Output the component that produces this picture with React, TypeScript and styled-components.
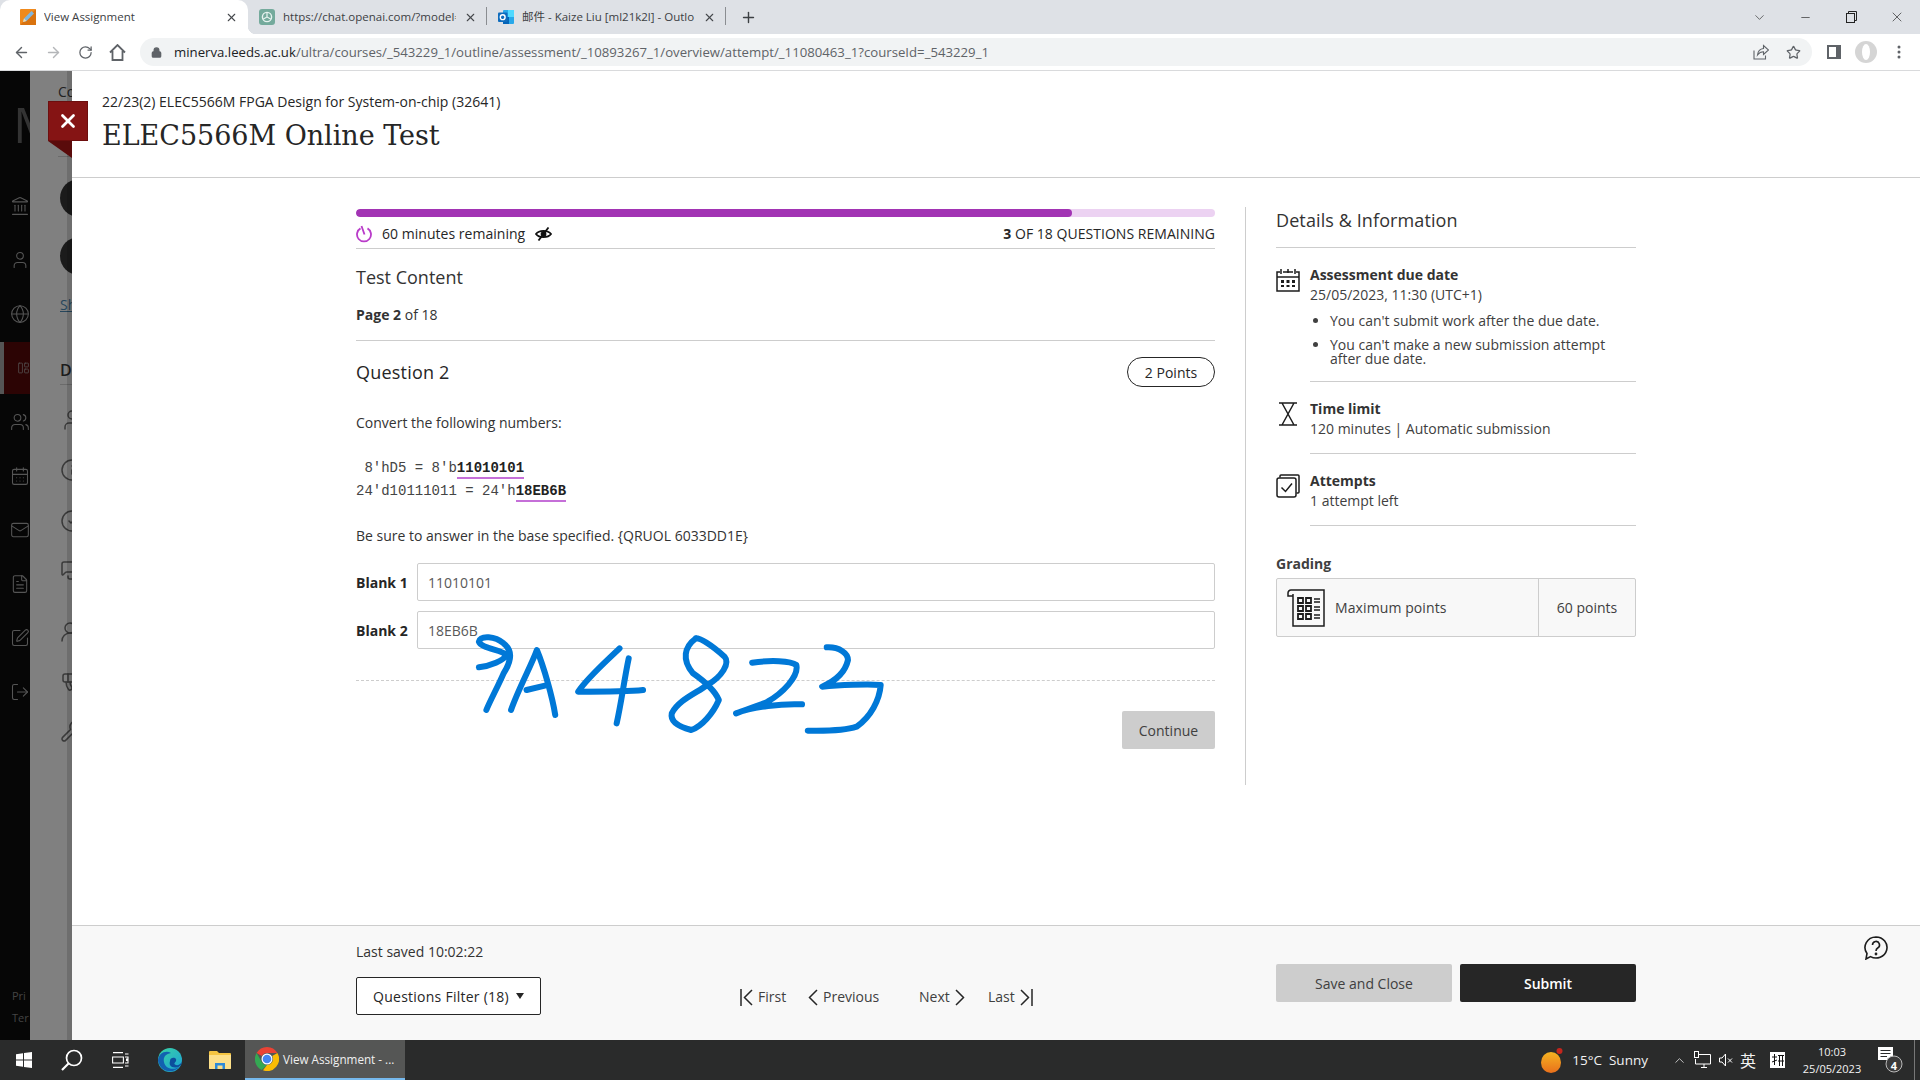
import React from 'react';
import styled, { createGlobalStyle } from 'styled-components';
import { Landmark, User, Globe, LayoutPanelLeft, Users, CalendarDays, Mail, FileText, SquarePen, LogOut, Info, CircleCheck, MessagesSquare, UsersRound, Megaphone, Wrench, Minus, Plus, ArrowLeft, ArrowRight, RotateCw, Lock, X, Star, ChevronUp, ChevronDown } from 'lucide-react';

const Global = createGlobalStyle`
  html, body { margin: 0; padding: 0; background: #fff; }
  #root { width: 1920px; height: 1080px; overflow: hidden; }
  * { box-sizing: border-box; }
  body { font-family: "Open Sans", "Noto Sans CJK SC", sans-serif; color: #262626; }
`;

const Page = styled.div`
  width: 1920px; height: 1080px; display: flex; flex-direction: column; position: relative; overflow: hidden;
`;

/* ---------- browser chrome ---------- */
const TabStrip = styled.div`
  height: 34px; background: #dee1e6; display: flex; align-items: stretch; flex: none; font-size: 12px; color: #3c4043;
`;
const Tab = styled.div<{ $w: number; $active?: boolean; $sep?: boolean }>`
  width: ${p => p.$w}px; display: flex; align-items: center; position: relative;
  padding: 0 10px 0 ${p => (p.$active ? 20 : 11)}px; gap: 8px;
  background: ${p => (p.$active ? '#fff' : 'transparent')};
  border-radius: ${p => (p.$active ? '10px 10px 0 0' : '0')};
  ${p => p.$sep && `&::after { content: ''; position: absolute; right: 0; top: 7px; bottom: 9px; width: 1px; background: #8a8d91; }`}
  ${p => p.$active && `&::after { content: ''; position: absolute; right: -8px; bottom: 0; width: 8px; height: 8px; background: radial-gradient(circle at 100% 0, transparent 8px, #fff 8.5px); }`}
`;
const TabTitle = styled.span`
  flex: 1; white-space: nowrap; overflow: hidden; font-size: 11.5px; line-height: 16px;
`;
const TabClose = styled.span`
  display: flex; flex: none; color: #45484c;
`;
const NewTab = styled.div`
  width: 44px; display: flex; align-items: center; justify-content: center; color: #3c4043;
`;
const WindowControls = styled.div`
  margin-left: auto; display: flex; align-items: center; color: #222; padding-right: 0;
`;
const WinBtn = styled.div<{ $w: number }>`
  width: ${p => p.$w}px; display: flex; justify-content: center; align-items: center; height: 28px;
`;
const Toolbar = styled.div`
  height: 37px; background: #fff; border-bottom: 1px solid #d9dadc; display: flex; align-items: flex-start; flex: none; padding-top: 4px;
`;
const NavBtn = styled.div<{ $muted?: boolean }>`
  width: 32px; height: 28px; display: flex; align-items: center; justify-content: center;
  color: ${p => (p.$muted ? '#b4b6b9' : '#5f6368')};
`;
const NavGroup = styled.div`
  display: flex; padding-left: 5px; width: 140px;
`;
const Omnibox = styled.div`
  width: 1672px; height: 28px; background: #f1f3f4; border-radius: 14px; display: flex; align-items: center; padding: 0 0 0 11px;
`;
const Url = styled.span`
  font-family: "Open Sans", sans-serif; font-size: 13.2px; color: #5f6368; margin-left: 12px; white-space: nowrap;
  b { font-weight: 400; color: #202124; }
`;
const OmniEnd = styled.div`
  margin-left: auto; display: flex; align-items: center; gap: 17px; padding-right: 11px; color: #5f6368;
`;
const ToolEnd = styled.div`
  display: flex; align-items: center; height: 28px; color: #5f6368; margin-left: 15px; gap: 14px;
`;
const Avatar = styled.div`
  width: 22px; height: 22px; border-radius: 50%; background: #d5d5d5; display: flex; align-items: center; justify-content: center;
  &::after { content: ''; width: 8px; height: 16px; border-radius: 50%; background: #fff; }
`;
const MenuDots = styled.div`
  margin-left: 6px; display: flex;
`;

/* ---------- underlying (dimmed) course page ---------- */
const Body = styled.div`
  flex: 1; display: flex; min-height: 0; position: relative;
`;
const Rail = styled.nav`
  width: 30px; flex: none; background: #060606; display: flex; flex-direction: column; overflow: hidden; color: #555;
`;
const RailLogo = styled.div`
  height: 108px; padding: 22px 0 0 13px; font-family: "Open Sans", sans-serif; font-size: 50px; line-height: 62px; color: #333; white-space: nowrap;
`;
const RailItem = styled.div<{ $active?: boolean }>`
  height: 54px; flex: none; display: flex; align-items: center; padding-left: 10px;
  ${p => p.$active && `background: #2c0404; border-left: 4px solid #555; padding-left: 13px; color: #5a5a5a; margin: 1px 0;height: 52px;`}
`;
const RailFoot = styled.div`
  margin-top: auto; padding: 0 0 11px 12px; font-size: 11px; line-height: 22px; color: #444;
`;
const Under = styled.div`
  width: 42px; flex: none; background: #808080; overflow: hidden; position: relative; color: #3a3a3a; padding-left: 30px;
  &::after { content: ''; position: absolute; top: 0; bottom: 0; right: 0; width: 5px; background: rgba(0,0,0,.14); }
`;
const UnderInner = styled.div`
  width: 120px; display: flex; flex-direction: column; align-items: flex-start;
`;
const UnderCourse = styled.div`
  height: 86px; padding-top: 12px; margin-left: -2px; font-size: 14px; line-height: 18px; color: #222; border-bottom: 1px solid #6b6b6b; width: 100%;
`;
const UnderCircle = styled.div<{ $top: number }>`
  width: 38px; height: 38px; border-radius: 50%; background: #1b1b1b; margin-top: ${p => p.$top}px; flex: none;
`;
const UnderLink = styled.div`
  margin-top: 20px; font-size: 14px; line-height: 20px; color: #26465c; text-decoration: underline;
`;
const UnderHead = styled.div`
  margin-top: 45px; width: 100%; height: 25px; font-size: 16px; font-weight: 600; line-height: 20px; color: #1d1d1d; border-bottom: 1px solid #6b6b6b;
`;
const UnderIcon = styled.div<{ $top: number }>`
  margin-top: ${p => p.$top}px; display: flex; height: 24px; align-items: center;
`;
const CloseTab = styled.button`
  position: absolute; left: 48px; top: 30px; width: 40px; height: 40px; background: #851414; border: 1px solid #6d0e0e; padding: 0; color: #fff;
  display: flex; align-items: center; justify-content: center; z-index: 3;
  &::after { content: ''; position: absolute; left: -1px; top: 39px; border-style: solid; border-width: 0 24px 17px 0; border-color: transparent #5a0b0b transparent transparent; width:0;height:0; }
`;

/* ---------- panel ---------- */
const Panel = styled.div`
  flex: 1; background: #fff; display: flex; flex-direction: column; min-width: 0;
`;
const Header = styled.header`
  height: 107px; flex: none; border-bottom: 1px solid #cdcdcd; padding: 21px 0 0 30px;
`;
const Crumb = styled.div`
  font-size: 14px; line-height: 20px; color: #262626;
`;
const Title = styled.h1`
  margin: 4px 0 0; font-family: "DejaVu Serif", serif; font-weight: 400; font-size: 27px; line-height: 40px; color: #262626; letter-spacing: -0.03px;
`;
const Main = styled.main`
  flex: 1; min-height: 0; padding: 31px 0 0 284px; display: flex; align-items: flex-start;
`;
const Column = styled.section`
  width: 859px; flex: none;
`;
const Bar = styled.div`
  height: 8px; border-radius: 4px; background: #ecd2f2; overflow: hidden;
`;
const BarFill = styled.div`
  height: 100%; background: #a234b4; border-radius: 4px;
`;
const StatusRow = styled.div`
  height: 32px; padding-top: 2px; display: flex; align-items: center; border-bottom: 1px solid #cdcdcd; font-size: 14px; color: #262626; letter-spacing: .03px;
`;
const StatusRight = styled.span`
  margin-left: auto; b { font-weight: 700; }
`;
const StatusText = styled.span`
  margin-left: 10px; margin-right: 10px;
`;
const SectionTitle = styled.h2`
  margin: 15px 0 0; font-size: 18px; font-weight: 400; line-height: 26px; color: #333;
`;
const PageCount = styled.div`
  margin-top: 15px; height: 36px; font-size: 14px; line-height: 20px; border-bottom: 1px solid #cdcdcd; padding-bottom: 0; color: #333;
  b { font-weight: 700; }
`;
const QuestionHead = styled.div`
  margin-top: 16px; height: 30px; display: flex; align-items: center; justify-content: space-between;
`;
const QuestionTitle = styled.h3`
  margin: 0; font-size: 18px; font-weight: 500; line-height: 26px; color: #262626; letter-spacing: .2px;
`;
const Pill = styled.div`
  width: 88px; height: 30px; border: 1px solid #262626; border-radius: 15px; font-size: 14px; display: flex; align-items: center; justify-content: center;
`;
const Para = styled.p<{ $top: number }>`
  margin: ${p => p.$top}px 0 0; font-size: 14px; line-height: 20px; color: #333;
`;
const Code = styled.pre`
  margin: 24px 0 0; font-family: "Liberation Mono", monospace; font-size: 14px; line-height: 23px; color: #444;
  b { font-weight: 700; color: #222; border-bottom: 2px solid #c56fd8; padding-bottom: 1px; }
`;
const BlankRow = styled.div<{ $top: number }>`
  margin-top: ${p => p.$top}px; display: flex; align-items: center; gap: 9px;
`;
const BlankLabel = styled.label`
  width: 52px; flex: none; font-size: 14px; font-weight: 700; white-space: nowrap; color: #262626;
`;
const BlankInput = styled.input`
  flex: 1; min-width: 0; height: 38px; border: 1px solid #cdcdcd; border-radius: 2px; padding: 0 10px; font: 400 14px "Open Sans", sans-serif; color: #595959; background: #fff; outline: none;
`;
const Dashed = styled.div`
  margin-top: 31px; border-top: 1px dashed #cdcdcd;
`;
const ContinueRow = styled.div`
  margin-top: 30px; display: flex; justify-content: flex-end;
`;
const GreyButton = styled.button<{ $w: number }>`
  width: ${p => p.$w}px; height: 38px; background: #cdcdcd; border: 0; border-radius: 2px; font: 400 14px "Open Sans", sans-serif; color: #404040; padding: 0;
`;
const Divider = styled.div`
  width: 1px; height: 578px; margin: -2px 30px 0 30px; background: #cdcdcd; flex: none;
`;
const Side = styled.aside`
  width: 360px; flex: none;
`;
const SideTitle = styled.h2`
  margin: -2px 0 0; height: 41px; font-size: 18px; font-weight: 400; line-height: 26px; color: #333; border-bottom: 1px solid #cdcdcd; letter-spacing: .1px;
`;
const InfoRow = styled.div<{ $h: number }>`
  display: flex; gap: 10px; height: ${p => p.$h}px;
`;
const InfoIcon = styled.div`
  width: 24px; flex: none; padding-top: 20px; display: flex; justify-content: center;
`;
const InfoBody = styled.div`
  flex: 1; padding-top: 17px; font-size: 14px; line-height: 20px; border-bottom: 1px solid #cdcdcd; color: #404040;
  strong { display: block; font-weight: 700; color: #333; }
`;
const InfoList = styled.ul`
  margin: 9px 0 0; padding: 0 0 0 20px; li { line-height: 14px; margin-bottom: 10px; padding: 0; }
`;
const GradeLabel = styled.div`
  margin-top: 28px; font-size: 14px; line-height: 20px; font-weight: 700; color: #404040;
`;
const GradeTable = styled.div`
  margin-top: 4px; height: 59px; border: 1px solid #cdcdcd; border-radius: 2px; background: #f8f8f8; display: flex; align-items: center; font-size: 14px; color: #404040;
`;
const GradeMain = styled.div`
  width: 262px; height: 100%; display: flex; align-items: center; gap: 10px; padding-left: 10px; border-right: 1px solid #cdcdcd; font-weight: 500; letter-spacing: .1px;
`;
const GradeValue = styled.div`
  flex: 1; text-align: center;
`;

/* ---------- footer ---------- */
const Footer = styled.footer`
  height: 115px; flex: none; background: #f8f8f8; border-top: 1px solid #cdcdcd; padding-left: 284px; display: grid; grid-template-columns: 384px 536px 360px; position: relative;
`;
const FootLeft = styled.div`
  padding-top: 16px;
`;
const Saved = styled.div`
  font-size: 14px; line-height: 20px; color: #333;
`;
const Filter = styled.button`
  margin-top: 15px; width: 185px; height: 38px; background: #fff; border: 1px solid #262626; border-radius: 2px; font: 500 14px "Open Sans", sans-serif; letter-spacing: .25px; color: #262626; display: flex; align-items: center; justify-content: center; gap: 7px; padding: 0;
  &::after { content: ''; border-style: solid; border-width: 6px 4.5px 0; border-color: #262626 transparent transparent; }
`;
const Pager = styled.nav`
  padding-top: 61px; display: flex; height: 100%; align-items: flex-start; font-size: 14px; line-height: 20px; color: #404040;
`;
const PagerLink = styled.div<{ $w: number }>`
  width: ${p => p.$w}px; display: flex; align-items: center; gap: 5px; height: 20px; white-space: nowrap;
`;
const Actions = styled.div`
  padding-top: 38px; display: flex; gap: 8px;
`;
const SubmitBtn = styled.button`
  width: 176px; height: 38px; background: #262626; border: 0; border-radius: 2px; color: #fff; font: 600 14px "Open Sans", sans-serif; padding: 0;
`;
const Help = styled.div`
  position: absolute; right: 32px; top: 10px; display: flex;
`;

/* ---------- handwriting overlay ---------- */
const Scribble = styled.svg`
  position: absolute; left: 340px; top: 479px; width: 900px; height: 220px; pointer-events: none; z-index: 4;
`;

/* ---------- taskbar ---------- */
const Taskbar = styled.div`
  height: 40px; flex: none; background: #2a2b2b; display: flex; align-items: stretch; color: #fff;
`;
const TaskSlot = styled.div<{ $w: number }>`
  width: ${p => p.$w}px; display: flex; align-items: center; justify-content: center; flex: none;
`;
const TaskApp = styled.div`
  width: 160px; background: #555655; border-bottom: 2px solid #76b9ed; display: flex; align-items: center; gap: 4px; padding-left: 10px; font-size: 11.7px; color: #f0f0f0; white-space: nowrap;
`;
const Tray = styled.div`
  margin-left: auto; display: flex; align-items: center; font-size: 13px; color: #f2f2f2; padding-right: 5px;
`;
const TrayText = styled.span<{ $l: number }>`
  margin-left: ${p => p.$l}px; white-space: nowrap; font-size: 13.5px;
`;
const TrayItem = styled.div<{ $l: number; $big?: boolean }>`
  margin-left: ${p => p.$l}px; display: flex; align-items: center; font-size: ${p => (p.$big ? 16 : 13)}px;
`;
const Clock = styled.div`
  margin-left: 18px; width: 58px; text-align: center; font-size: 11px; line-height: 17px; white-space: nowrap; display: flex; flex-direction: column; align-items: center;
`;
const ShowDesk = styled.div`
  margin-left: 11px; width: 1px; height: 100%; background: #777;
`;
const NotifCount = styled.span`
  position: absolute; right: 4px; bottom: 1px; font-size: 11px; font-weight: 700; color: #fff; width: 10px; text-align: center; line-height: 14px;
`;
const NotifWrap = styled.div`
  position: relative; display: flex;
`;

const AssignFav = () => (
  <svg width="16" height="16" viewBox="0 0 16 16"><rect width="16" height="16" rx="1" fill="#f08a1d" /><path d="M0 16 L16 0 V16Z" fill="#d9730f" /><path d="M3 13 l1-3.5 L11.5 2 14 4.5 6.5 12Z" fill="#7fb6e0" /><path d="M3 13 l1-3.5 2.5 2.5Z" fill="#f7dba8" /></svg>
);
const GptFav = () => (
  <svg width="16" height="16" viewBox="0 0 16 16"><rect width="16" height="16" rx="3" fill="#74aa9c" /><circle cx="8" cy="8" r="4.6" fill="none" stroke="#e6f2ef" strokeWidth="1.4" /><path d="M8 3.4 V8 L12 10.3 M8 8 L4 10.3" stroke="#e6f2ef" strokeWidth="1.2" fill="none" /></svg>
);
const OutlookFav = () => (
  <svg width="16" height="16" viewBox="0 0 16 16"><rect x="5" y="1" width="11" height="14" rx="1" fill="#28a8ea" /><rect x="10" y="1" width="6" height="7" fill="#50d9ff" /><rect x="5" y="8" width="6" height="7" fill="#0364b8" /><rect y="3.5" width="9.5" height="9.5" rx="1" fill="#0f6cbd" /><circle cx="4.7" cy="8.2" r="2.4" fill="none" stroke="#fff" strokeWidth="1.4" /></svg>
);
const ShareIcon = () => (
  <svg width="16" height="16" viewBox="0 0 16 16" fill="none" stroke="#5f6368" strokeWidth="1.1"><path d="M1 6.500V15H12.500V11.500" /><path d="M4.500 11 C5 7 7.500 4.800 10.500 4.500 V1.500 L15.500 6 L10.500 10.500 V7.800 C8 7.800 6 9 4.500 11Z" /></svg>
);
const TimerIcon = () => (
  <svg width="16" height="18" viewBox="0 0 16 18" fill="none" stroke="#b93bc9" strokeWidth="1.8"><path d="M4.500 3.400 A7 7 0 1 0 11.500 3.400" /><path d="M5.500 1 L8.500 9.500" /></svg>
);
const EyeOff = () => (
  <svg width="17" height="14" viewBox="0 0 17 14" fill="none" stroke="#111" strokeWidth="1.8"><path d="M1 7 C4 2.8 13 2.8 16 7 C13 11.2 4 11.2 1 7Z" /><circle cx="8.5" cy="7" r="2" fill="#111" /><path d="M3.5 13.5 L13.5 .5" /></svg>
);
const CalIcon = () => (
  <svg width="24" height="24" viewBox="0 0 24 24" fill="none" stroke="#1c1c1c" strokeWidth="1.5"><path d="M4 4H1V23H23V4H20M7 4H17M1 9H23M5 1V6M19 1V6M12 1V5" /><path d="M5 12h3v3H5zM10.500 12h3v3h-3zM16 12h3v3h-3zM5 17h3v2H5zM10.500 17h3v2h-3zM16 17h3v2h-3z" fill="#1c1c1c" stroke="none" /></svg>
);
const Hourglass = () => (
  <svg width="18" height="24" viewBox="0 0 18 24" fill="none" stroke="#1c1c1c" strokeWidth="1.5"><path d="M0 1H18M0 23H18M3 1 L15 23M15 1 L3 23" /></svg>
);
const AttemptIcon = () => (
  <svg width="24" height="24" viewBox="0 0 24 24" fill="none" stroke="#1c1c1c" strokeWidth="1.5"><rect x="1" y="4" width="19" height="19" rx="2" /><path d="M4 3.500 V2 a1 1 0 0 1 1-1 H22 a1 1 0 0 1 1 1 V18 a1 1 0 0 1-1 1 h-1.500" /><path d="M5.500 13.500 L9.500 17.500 L16 9.500" /></svg>
);
const GradeIcon = () => (
  <svg width="38" height="38" viewBox="0 0 38 38" fill="none" stroke="#1c1c1c" strokeWidth="1.5"><path d="M6 5 V37 H37 V1 H4 a3 3 0 0 0-3 3 V7 H6" /><path d="M11 9h5v5h-5zM19 9h5v5h-5zM11 17h5v5h-5zM19 17h5v5h-5zM11 25h5v5h-5zM19 25h5v5h-5z" strokeWidth="1.8" /><path d="M27 10h6M27 13h6M27 18h6M27 21h6M27 26h6M27 29h6" strokeWidth="1.4" /></svg>
);
const Chev = ({ dir, bar }: { dir: 'l' | 'r'; bar?: boolean }) => (
  <svg width={bar ? 13 : 10} height="17" viewBox={bar ? '0 0 13 17' : '0 0 10 17'} fill="none" stroke="#262626" strokeWidth="1.500">
    {dir === 'l' ? (
      bar ? <><path d="M1 0V17" /><path d="M12 1 L4.500 8.500 L12 16" /></> : <path d="M9 1 L1.500 8.500 L9 16" />
    ) : (
      bar ? <><path d="M12 0V17" /><path d="M1 1 L8.500 8.500 L1 16" /></> : <path d="M1 1 L8.500 8.500 L1 16" />
    )}
  </svg>
);
const HelpIcon = () => (
  <svg width="24" height="24" viewBox="0 0 24 24" fill="none" stroke="#1c1c1c" strokeWidth="1.600"><path d="M12 1 a11 10.500 0 1 1 -5.500 19.600 L2 23 L3 17.500 A11 10.500 0 0 1 12 1Z" /><path d="M8.500 9 a3.500 3.500 0 1 1 5.200 3 c-1.200 .8-1.700 1.500-1.700 3" /><circle cx="12" cy="18" r=".6" fill="#1c1c1c" /></svg>
);
const WinLogo = () => (
  <svg width="16" height="16" viewBox="0 0 16 16" fill="#fff"><path d="M0 2.300 L7 1.300 V7.500 H0Z M8 1.100 L16 0 V7.500 H8Z M0 8.500 H7 V14.700 L0 13.700Z M8 8.500 H16 V16 L8 14.900Z" /></svg>
);
const SearchIcon = () => (
  <svg width="22" height="22" viewBox="0 0 22 22" fill="none" stroke="#fff" strokeWidth="1.700"><circle cx="13" cy="9" r="7.500" /><path d="M7.500 14.500 L1 21" strokeWidth="2.200" /></svg>
);
const TaskView = () => (
  <svg width="17" height="16" viewBox="0 0 17 16" fill="none" stroke="#fff" strokeWidth="1.100"><path d="M1 .6H11M1 15.400H11M.6 5h10.800v6H.6zM13 2h3.500M13 14h3.500M13 5h3v6h-3" /><path d="M14 6.500h2v2.500h-2z" fill="#fff" stroke="none" /></svg>
);
const EdgeIcon = () => (
  <svg width="24" height="24" viewBox="0 0 24 24"><defs><linearGradient id="e1" x1="0" y1="0" x2="1" y2="1"><stop offset="0" stopColor="#3bd4a3" /><stop offset="1" stopColor="#1ba0d8" /></linearGradient></defs><circle cx="12" cy="12" r="12" fill="url(#e1)" /><path d="M0 13 C0 5 8 2 13 5 C7 6 5 10 6 14 C7 20 14 23 21 19 C17 25 3 26 0 13Z" fill="#1261b0" /><path d="M12 13 C12 9 17 9 18 11 C19 14 15 15 17 16.500 C19 18 22 17 24 14 C23 20 17 20 14 19 C12 18 11 16 12 13Z" fill="#0c4f9d" /></svg>
);
const FolderIcon = () => (
  <svg width="22" height="18" viewBox="0 0 22 18"><path d="M0 1 a1 1 0 0 1 1-1 H8 L10 2 H21 a1 1 0 0 1 1 1 V17 a1 1 0 0 1-1 1 H1 a1 1 0 0 1-1-1Z" fill="#f5c542" /><path d="M0 4 H22 V17 a1 1 0 0 1-1 1 H1 a1 1 0 0 1-1-1Z" fill="#fde08a" /><path d="M6 18 V12 H16 V18 H13.500 V14.500 H8.500 V18Z" fill="#2e8bd8" /></svg>
);
const ChromeIcon = () => (
  <svg width="24" height="24" viewBox="0 0 24 24"><path d="M12 0 A12 12 0 0 1 22.400 6 H12 A6 6 0 0 0 6.800 9 L1.600 6 A12 12 0 0 1 12 0Z" fill="#ea4335" /><path d="M1.600 6 L6.800 15 A6 6 0 0 0 12 18 L6.800 23 A12 12 0 0 1 1.600 6Z" fill="#34a853" /><path d="M22.400 6 A12 12 0 0 1 8 23.300 L12 18 A6 6 0 0 0 17.200 9 Z" fill="#fbbc04" /><circle cx="12" cy="12" r="5.500" fill="#fff" /><circle cx="12" cy="12" r="4.300" fill="#4285f4" /></svg>
);
const Weather = () => (
  <svg width="22" height="26" viewBox="0 0 22 26"><defs><linearGradient id="w1" x1="0" y1="0" x2="0" y2="1"><stop offset="0" stopColor="#f5b321" /><stop offset="1" stopColor="#e9701c" /></linearGradient></defs><ellipse cx="10" cy="15.500" rx="10" ry="10.500" fill="url(#w1)" /><circle cx="18.500" cy="4" r="3" fill="#c4261d" /></svg>
);
const NetIcon = () => (
  <svg width="17" height="18" viewBox="0 0 17 18" fill="none" stroke="#fff" strokeWidth="1"><path d="M5 3.500H16.500V13H1.500V8M7 16.500H13M10 13V16.500" /><rect x=".5" y=".5" width="4" height="6" fill="#2a2b2b" /></svg>
);
const MuteIcon = () => (
  <svg width="14" height="14" viewBox="0 0 14 14" fill="none" stroke="#fff" strokeWidth="1"><path d="M.5 5H3L6.500 1V13L3 9H.500Z" /><path d="M9 5.500L13 9.500M13 5.500L9 9.500" /></svg>
);
const PinyinBox = () => (
  <svg width="15" height="16" viewBox="0 0 15 16"><rect width="15" height="16" fill="#fff" /><path d="M2 5H7M4.500 2V13M2 10L7 8M8 3.500H14M8 9H14M9.500 3.500V14M12.500 3.500V14" stroke="#111" strokeWidth="1" fill="none" /></svg>
);
const Notif = () => (
  <svg width="25" height="27" viewBox="0 0 25 27"><path d="M0 0H15V13H0Z" fill="#fff" /><path d="M2.500 3.500H12.500M2.500 6.500H12.500M2.500 9.500H9" stroke="#2a2b2b" strokeWidth="1.200" /><circle cx="16" cy="17" r="8" fill="#3a3a3a" stroke="#bbb" strokeWidth="1" /></svg>
);
const SidePanel = () => (
  <svg width="14" height="14" viewBox="0 0 14 14"><path d="M0 0H14V14H0Z M2 2V12H9V2Z" fill="#5f6368" fillRule="evenodd" /></svg>
);
const Dots = () => (
  <svg width="4" height="14" viewBox="0 0 4 14" fill="#5f6368"><circle cx="2" cy="2" r="1.500" /><circle cx="2" cy="7" r="1.500" /><circle cx="2" cy="12" r="1.500" /></svg>
);

const railIcons = [Landmark, User, Globe, LayoutPanelLeft, Users, CalendarDays, Mail, FileText, SquarePen, LogOut];
const underIcons = [
  { I: User, top: 23 }, { I: Info, top: 26 }, { I: CircleCheck, top: 27 }, { I: MessagesSquare, top: 27 },
  { I: UsersRound, top: 36 }, { I: Megaphone, top: 24 }, { I: Wrench, top: 27 },
];

const strokes = [
  'M242 352 C262 348 285 332 290 315 C285 300 245 295 242 275 C245 255 270 258 285 280 C300 300 300 330 285 370 C275 410 262 450 255 480',
  'M298 480 C310 420 335 340 343 300 C355 350 370 440 375 495',
  'M325 420 L357 407',
  'M487 295 C460 340 430 385 415 425 C450 425 500 425 528 420',
  'M503 325 C495 390 490 460 482 520',
  'M620 265 C600 290 595 330 615 370 C640 400 655 430 660 450 C650 490 630 530 612 540 C590 530 575 515 578 490 C590 450 620 430 640 405 C665 380 680 340 670 320 C650 290 630 265 620 265',
  'M718 338 C750 330 785 332 795 345 C800 380 770 430 745 455 C725 470 705 480 690 490 C720 470 770 460 805 463',
  'M848 292 C870 290 885 310 885 330 C880 370 860 395 840 410 C870 405 920 402 942 405 C940 450 925 500 900 530 C880 542 845 543 815 542',
];

export default function App() {
  return (
    <Page>
      <Global />
      <TabStrip>
        <Tab $w={248} $active>
          <AssignFav />
          <TabTitle>View Assignment</TabTitle>
          <TabClose><X size={13} strokeWidth={2} /></TabClose>
        </Tab>
        <Tab $w={239} $sep>
          <GptFav />
          <TabTitle>https://chat.openai.com/?model=</TabTitle>
          <TabClose><X size={13} strokeWidth={2} /></TabClose>
        </Tab>
        <Tab $w={239} $sep>
          <OutlookFav />
          <TabTitle>邮件 - Kaize Liu [ml21k2l] - Outlo</TabTitle>
          <TabClose><X size={13} strokeWidth={2} /></TabClose>
        </Tab>
        <NewTab><Plus size={17} strokeWidth={2} /></NewTab>
        <WindowControls>
          <WinBtn $w={46}><ChevronDown size={15} strokeWidth={1} /></WinBtn>
          <WinBtn $w={46}><Minus size={13} strokeWidth={1.2} /></WinBtn>
          <WinBtn $w={46}>
            <svg width="11" height="12" viewBox="0 0 11 12" fill="none" stroke="#222" strokeWidth="1"><rect x=".5" y="2.500" width="8" height="9" /><path d="M2.500 2.500V.5H10.500V9.500H8.500" /></svg>
          </WinBtn>
          <WinBtn $w={46}><X size={16} strokeWidth={1} /></WinBtn>
        </WindowControls>
      </TabStrip>
      <Toolbar>
        <NavGroup>
          <NavBtn><ArrowLeft size={17} strokeWidth={2} /></NavBtn>
          <NavBtn $muted><ArrowRight size={17} strokeWidth={2} /></NavBtn>
          <NavBtn><RotateCw size={15} strokeWidth={2} /></NavBtn>
          <NavBtn>
            <svg width="17" height="17" viewBox="0 0 17 17" fill="none" stroke="#5f6368" strokeWidth="1.800"><path d="M1 8.500 L8.500 1 L16 8.500 M3.500 7 V16 H13.500 V7" /></svg>
          </NavBtn>
        </NavGroup>
        <Omnibox>
          <Lock size={11} strokeWidth={3} color="#5f6368" fill="#5f6368" />
          <Url><b>minerva.leeds.ac.uk</b>/ultra/courses/_543229_1/outline/assessment/_10893267_1/overview/attempt/_11080463_1?courseId=_543229_1</Url>
          <OmniEnd>
            <ShareIcon />
            <Star size={15} strokeWidth={2} />
          </OmniEnd>
        </Omnibox>
        <ToolEnd>
          <SidePanel />
          <Avatar />
          <MenuDots><Dots /></MenuDots>
        </ToolEnd>
      </Toolbar>
      <Body>
        <Rail>
          <RailLogo>M</RailLogo>
          {railIcons.map((I, i) => (
            <RailItem key={i} $active={i === 3}><I size={32} strokeWidth={1.3} /></RailItem>
          ))}
          <RailFoot>Pri<br />Ter</RailFoot>
        </Rail>
        <Under>
          <UnderInner>
            <UnderCourse>Co</UnderCourse>
            <UnderCircle $top={22} />
            <UnderCircle $top={20} />
            <UnderLink>Sh</UnderLink>
            <UnderHead>D</UnderHead>
            {underIcons.map(({ I, top }, i) => (
              <UnderIcon key={i} $top={top}><I size={24} strokeWidth={1.5} /></UnderIcon>
            ))}
          </UnderInner>
        </Under>
        <CloseTab aria-label="Close"><X size={22} strokeWidth={3} /></CloseTab>
        <Panel>
          <Header>
            <Crumb>22/23(2) ELEC5566M FPGA Design for System-on-chip (32641)</Crumb>
            <Title>ELEC5566M Online Test</Title>
          </Header>
          <Main>
            <Column>
              <Bar><BarFill style={{ width: `${(15 / 18) * 100}%` }} /></Bar>
              <StatusRow>
                <TimerIcon />
                <StatusText>60 minutes remaining</StatusText>
                <EyeOff />
                <StatusRight><b>3</b> OF 18 QUESTIONS REMAINING</StatusRight>
              </StatusRow>
              <SectionTitle>Test Content</SectionTitle>
              <PageCount><b>Page 2</b> of 18</PageCount>
              <QuestionHead>
                <QuestionTitle>Question 2</QuestionTitle>
                <Pill>2 Points</Pill>
              </QuestionHead>
              <Para $top={26}>Convert the following numbers:</Para>
              <Code>{" 8'hD5 = 8'b"}<b>11010101</b>{"\n24'd10111011 = 24'h"}<b>18EB6B</b></Code>
              <Para $top={23}>Be sure to answer in the base specified. {'{QRUOL 6033DD1E}'}</Para>
              <BlankRow $top={17}><BlankLabel>Blank 1</BlankLabel><BlankInput readOnly value="11010101" /></BlankRow>
              <BlankRow $top={10}><BlankLabel>Blank 2</BlankLabel><BlankInput readOnly value="18EB6B" /></BlankRow>
              <Dashed />
              <ContinueRow><GreyButton $w={93}>Continue</GreyButton></ContinueRow>
            </Column>
            <Divider />
            <Side>
              <SideTitle>Details &amp; Information</SideTitle>
              <InfoRow $h={134}>
                <InfoIcon><CalIcon /></InfoIcon>
                <InfoBody>
                  <strong>Assessment due date</strong>
                  25/05/2023, 11:30 (UTC+1)
                  <InfoList>
                    <li>You can't submit work after the due date.</li>
                    <li>You can't make a new submission attempt after due date.</li>
                  </InfoList>
                </InfoBody>
              </InfoRow>
              <InfoRow $h={72}>
                <InfoIcon><Hourglass /></InfoIcon>
                <InfoBody>
                  <strong>Time limit</strong>
                  120 minutes | Automatic submission
                </InfoBody>
              </InfoRow>
              <InfoRow $h={72}>
                <InfoIcon><AttemptIcon /></InfoIcon>
                <InfoBody>
                  <strong>Attempts</strong>
                  1 attempt left
                </InfoBody>
              </InfoRow>
              <GradeLabel>Grading</GradeLabel>
              <GradeTable>
                <GradeMain><GradeIcon />Maximum points</GradeMain>
                <GradeValue>60 points</GradeValue>
              </GradeTable>
            </Side>
          </Main>
          <Footer>
            <FootLeft>
              <Saved>Last saved 10:02:22</Saved>
              <Filter>Questions Filter (18)</Filter>
            </FootLeft>
            <Pager>
              <PagerLink $w={68}><Chev dir="l" bar />First</PagerLink>
              <PagerLink $w={111}><Chev dir="l" />Previous</PagerLink>
              <PagerLink $w={69}>Next<Chev dir="r" /></PagerLink>
              <PagerLink $w={60}>Last<Chev dir="r" bar /></PagerLink>
            </Pager>
            <Actions>
              <GreyButton $w={176}>Save and Close</GreyButton>
              <SubmitBtn>Submit</SubmitBtn>
            </Actions>
            <Help><HelpIcon /></Help>
          </Footer>
        </Panel>
        <Scribble viewBox="0 0 1568 660" preserveAspectRatio="none" fill="none" stroke="#0078d7" strokeWidth="6" strokeLinecap="round" strokeLinejoin="round" aria-hidden>
          {strokes.map((d, i) => <path key={i} d={d} vectorEffect="non-scaling-stroke" />)}
        </Scribble>
      </Body>
      <Taskbar>
        <TaskSlot $w={48}><WinLogo /></TaskSlot>
        <TaskSlot $w={48}><SearchIcon /></TaskSlot>
        <TaskSlot $w={48}><TaskView /></TaskSlot>
        <TaskSlot $w={51}><EdgeIcon /></TaskSlot>
        <TaskSlot $w={50}><FolderIcon /></TaskSlot>
        <TaskApp><ChromeIcon />View Assignment - ...</TaskApp>
        <Tray>
          <Weather />
          <TrayText $l={9}>15°C&nbsp;&nbsp;Sunny</TrayText>
          <TrayItem $l={24}><ChevronUp size={15} strokeWidth={1.2} /></TrayItem>
          <TrayItem $l={7}><NetIcon /></TrayItem>
          <TrayItem $l={8}><MuteIcon /></TrayItem>
          <TrayItem $l={7} $big><span>英</span></TrayItem>
          <TrayItem $l={14}><PinyinBox /></TrayItem>
          <Clock><span>10:03</span><span>25/05/2023</span></Clock>
          <TrayItem $l={17}><NotifWrap><Notif /><NotifCount>4</NotifCount></NotifWrap></TrayItem>
          <ShowDesk />
        </Tray>
      </Taskbar>
    </Page>
  );
}
